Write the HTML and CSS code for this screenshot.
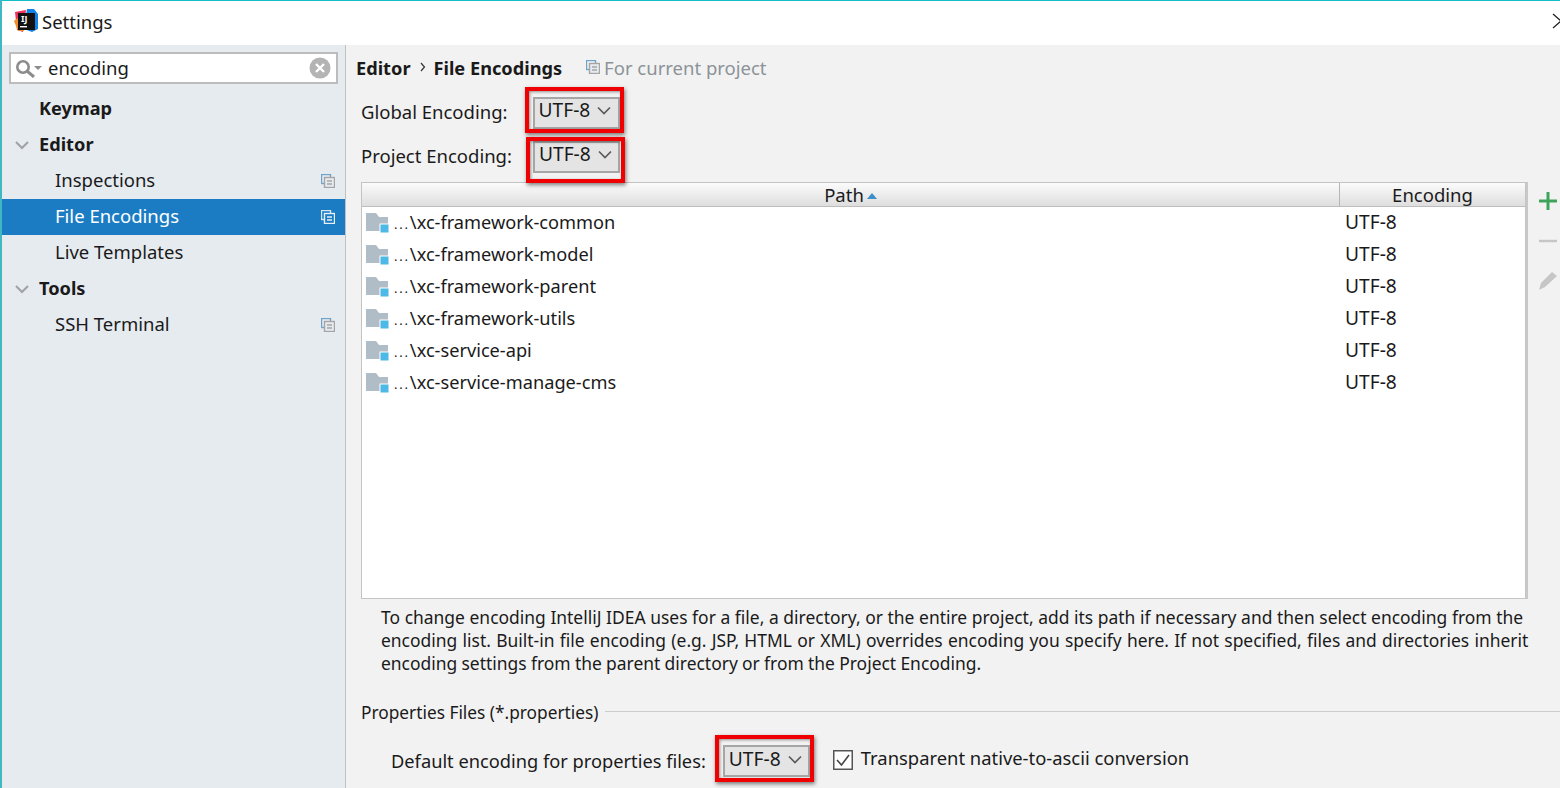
FILE: index.html
```html
<!DOCTYPE html>
<html>
    <head>
        <meta charset="utf-8">
        <title>Settings</title>
        <link rel="stylesheet" href="styles.css">
    </head>
    <body>
        <svg class="defs">
            <symbol id="copy" viewBox="0 0 14 14">
                <rect x="0.5" y="0.5" width="9" height="9" fill="none" stroke="#6fa3c7" stroke-width="1.4"></rect>
                <rect x="3.5" y="3.5" width="10" height="10" fill="#e6ebf0" stroke="#a5a5a5" stroke-width="1.4"></rect>
                <path d="M6 7h5M6 10h5" stroke="#a5a5a5" stroke-width="1.4"></path>
            </symbol>
            <symbol id="copyWhite" viewBox="0 0 14 14">
                <rect x="0.5" y="0.5" width="9" height="9" fill="none" stroke="#d5e6f3" stroke-width="1.4"></rect>
                <rect x="3.5" y="3.5" width="10" height="10" fill="#1b7cc4" stroke="#e8f0f6" stroke-width="1.4"></rect>
                <path d="M6 7h5M6 10h5" stroke="#e8f0f6" stroke-width="1.4"></path>
            </symbol>
            <symbol id="folder" viewBox="0 0 24 22">
                <path d="M0 1h10l3 4h9v14H0z" fill="#b0bcc6"></path>
                <rect x="14" y="12" width="9" height="9" fill="#4cb9e6" stroke="#fff"></rect>
            </symbol>
            <symbol id="chevron" viewBox="0 0 14 9">
                <path d="M1 1.5l6 6 6-6" fill="none" stroke="#5a5a5a" stroke-width="1.7"></path>
            </symbol>
            <symbol id="treeArrow" viewBox="0 0 14 9">
                <path d="M1 1l6 6 6-6" fill="none" stroke="#a0a4a8" stroke-width="2.2"></path>
            </symbol>
        </svg>

        <div class="titleBar">
            <svg class="appIcon" viewBox="0 0 24 24">
                <path d="M1 3l11-2-3 22-6-2z" fill="#f0325f"></path>
                <path d="M0 12l6-5 4 15-6 0z" fill="#f58a2e"></path>
                <path d="M13 0h7l4 5v15l-6 3-8-3z" fill="#1183e6"></path>
                <rect x="4" y="4" width="17" height="17" fill="#111"></rect>
                <text class="appIconText" x="7" y="13">IJ</text>
                <rect x="6" y="17" width="7" height="1.4" fill="#fff"></rect>
            </svg>
            <span class="titleText">Settings</span>
            <svg class="closeIcon" viewBox="0 0 10 16"><path d="M1 1l8 7-8 7" fill="none" stroke="#222" stroke-width="1.2"></path></svg>
        </div>

        <div class="main">
            <div class="sidebar">
                <div class="searchBox">
                    <svg class="searchIcon" viewBox="0 0 26 20">
                        <circle cx="7" cy="9" r="5.7" fill="none" stroke="#8c8c8c" stroke-width="2.6"></circle>
                        <path d="M11 13l7 6" stroke="#8c8c8c" stroke-width="3"></path>
                        <path d="M18 8h8l-4 4z" fill="#8c8c8c"></path>
                    </svg>
                    <span class="searchText">encoding</span>
                    <svg class="clearIcon" viewBox="0 0 22 22">
                        <circle cx="11" cy="11" r="10.5" fill="#b4b4b4"></circle>
                        <path d="M7 7l8 8M15 7l-8 8" stroke="#fff" stroke-width="2.4"></path>
                    </svg>
                </div>
                <div class="tree">
                    <div class="treeRow bold top"><span>Keymap</span></div>
                    <div class="treeRow bold top"><svg class="treeArrow"><use href="#treeArrow"></use></svg><span>Editor</span></div>
                    <div class="treeRow child"><span>Inspections</span><svg class="rowIcon"><use href="#copy"></use></svg></div>
                    <div class="treeRow child selected"><span>File Encodings</span><svg class="rowIcon"><use href="#copyWhite"></use></svg></div>
                    <div class="treeRow child"><span>Live Templates</span></div>
                    <div class="treeRow bold top"><svg class="treeArrow"><use href="#treeArrow"></use></svg><span>Tools</span></div>
                    <div class="treeRow child"><span>SSH Terminal</span><svg class="rowIcon"><use href="#copy"></use></svg></div>
                </div>
            </div>

            <div class="content">
                <div class="breadcrumb">
                    <span class="crumb">Editor</span>
                    <svg class="crumbSep" viewBox="0 0 6 10"><path d="M1 1l3.5 4L1 9" fill="none" stroke="#333" stroke-width="1.2"></path></svg>
                    <span class="crumb">File Encodings</span>
                    <svg class="crumbIcon"><use href="#copy"></use></svg>
                    <span class="scope">For current project</span>
                </div>

                <div class="encodingRow first">
                    <span class="encodingLabel">Global Encoding:</span>
                    <div class="combo"><span>UTF-8</span><svg class="comboArrow"><use href="#chevron"></use></svg></div>
                </div>
                <div class="encodingRow second">
                    <span class="encodingLabel">Project Encoding:</span>
                    <div class="combo"><span>UTF-8</span><svg class="comboArrow"><use href="#chevron"></use></svg></div>
                </div>

                <div class="tablePane">
                    <div class="table">
                        <div class="tableHead">
                            <div class="headPath">Path<svg class="sortArrow" viewBox="0 0 10 6"><path d="M0 6l5-6 5 6z" fill="#3d8ec9"></path></svg></div>
                            <div class="headEncoding">Encoding</div>
                        </div>
                        <div class="tableRow"><svg class="folderIcon"><use href="#folder"></use></svg><span class="pathCell"><small>...</small>\xc-framework-common</span><span class="encodingCell">UTF-8</span></div>
                        <div class="tableRow"><svg class="folderIcon"><use href="#folder"></use></svg><span class="pathCell"><small>...</small>\xc-framework-model</span><span class="encodingCell">UTF-8</span></div>
                        <div class="tableRow"><svg class="folderIcon"><use href="#folder"></use></svg><span class="pathCell"><small>...</small>\xc-framework-parent</span><span class="encodingCell">UTF-8</span></div>
                        <div class="tableRow"><svg class="folderIcon"><use href="#folder"></use></svg><span class="pathCell"><small>...</small>\xc-framework-utils</span><span class="encodingCell">UTF-8</span></div>
                        <div class="tableRow"><svg class="folderIcon"><use href="#folder"></use></svg><span class="pathCell"><small>...</small>\xc-service-api</span><span class="encodingCell">UTF-8</span></div>
                        <div class="tableRow"><svg class="folderIcon"><use href="#folder"></use></svg><span class="pathCell"><small>...</small>\xc-service-manage-cms</span><span class="encodingCell">UTF-8</span></div>
                    </div>
                    <div class="tableTools">
                        <svg class="toolIcon" viewBox="0 0 20 20"><path d="M10 1v18M1 10h18" stroke="#3fa45b" stroke-width="3"></path></svg>
                        <svg class="toolIcon" viewBox="0 0 20 20"><path d="M1 10h18" stroke="#c6c6c6" stroke-width="2.4"></path></svg>
                        <svg class="toolIcon" viewBox="0 0 20 20"><path d="M14 1l5 4L7 16l-6 3 2-7z" fill="#c6c6c6"></path></svg>
                    </div>
                </div>

                <div class="help">
                    <div class="helpOne">To change encoding IntelliJ IDEA uses for a file, a directory, or the entire project, add its path if necessary and then select encoding from the</div>
                    <div class="helpTwo">encoding list. Built-in file encoding (e.g. JSP, HTML or XML) overrides encoding you specify here. If not specified, files and directories inherit</div>
                    <div class="helpThree">encoding settings from the parent directory or from the Project Encoding.</div>
                </div>

                <div class="groupTitle"><span>Properties Files (*.properties)</span><div class="groupLine"></div></div>

                <div class="propertiesRow">
                    <span class="propertiesLabel">Default encoding for properties files:</span>
                    <div class="combo"><span>UTF-8</span><svg class="comboArrow"><use href="#chevron"></use></svg></div>
                    <svg class="checkbox" viewBox="0 0 20 20">
                        <rect x="0.75" y="0.75" width="18.5" height="18.5" fill="#fff" stroke="#555" stroke-width="1.5"></rect>
                        <path d="M4 10l4.5 5L16 5" fill="none" stroke="#444" stroke-width="1.6"></path>
                    </svg>
                    <span class="checkboxLabel">Transparent native-to-ascii conversion</span>
                </div>
            </div>
        </div>
    </body>
</html>
```

FILE: styles.css
```css
html, body {
    width: 100%;
    height: 100%;
    margin: 0;
    padding: 0;
    overflow: hidden;
}
body {
    display: flex;
    flex-direction: column;
    font-family: "Noto Sans", "Open Sans", sans-serif;
    font-size: 18.5px;
    color: #1a1a1a;
    background-color: #f2f2f2;
    border-left: 2px solid #3fb8c4;
    box-sizing: border-box;
}
.defs {
    display: none;
}
.titleBar {
    display: flex;
    align-items: center;
    height: 45px;
    flex: none;
    box-sizing: border-box;
    padding: 0 0 4px 12px;
    background-color: #fff;
    border-top: 1px solid #14c0c8;
}
.appIcon {
    width: 24px;
    height: 24px;
    margin-right: 4px;
}
.appIconText {
    font-size: 9px;
    font-weight: 700;
    fill: #fff;
}
.titleText {
    flex: 1;
}
.closeIcon {
    width: 10px;
    height: 16px;
    margin-right: -2px;
}
.main {
    display: flex;
    flex: 1;
    min-height: 0;
}
.sidebar {
    width: 344px;
    flex: none;
    box-sizing: border-box;
    padding-top: 7px;
    background-color: #e6ebf0;
    border-right: 1px solid #c0c0c0;
}
.searchBox {
    display: flex;
    align-items: center;
    height: 32px;
    box-sizing: border-box;
    margin: 0 7px 0 7px;
    padding: 0 5px 0 5px;
    background-color: #fff;
    border: 2px solid #bcbcbc;
}
.searchIcon {
    width: 26px;
    height: 20px;
    margin-right: 6px;
}
.searchText {
    flex: 1;
    padding-bottom: 2px;
}
.clearIcon {
    width: 22px;
    height: 22px;
}
.tree {
    padding-top: 7px;
}
.treeRow {
    display: flex;
    align-items: center;
    height: 36px;
    padding-right: 10px;
}
.treeRow span {
    flex: 1;
    padding-bottom: 2px;
}
.top {
    padding-left: 37px;
}
.bold {
    font-weight: 700;
    font-size: 18.2px;
}
.child {
    padding-left: 53px;
}
.child span {
    padding-bottom: 4px;
}
.selected {
    background-color: #1b7cc4;
    color: #fff;
}
.treeArrow {
    width: 14px;
    height: 9px;
    margin-left: -24px;
    margin-right: 10px;
}
.rowIcon {
    width: 14px;
    height: 14px;
}
.content {
    flex: 1;
    min-width: 0;
}
.breadcrumb {
    display: flex;
    align-items: center;
    height: 46px;
    box-sizing: border-box;
    padding: 0 0 2px 10px;
}
.crumb {
    font-weight: 700;
    font-size: 18.2px;
    padding-top: 2px;
}
.crumbSep {
    width: 6px;
    height: 10px;
    margin: 0 8px 0 9px;
}
.crumbIcon {
    width: 14px;
    height: 14px;
    margin: 0 4px 0 24px;
}
.scope {
    color: #8c9298;
}
.encodingRow {
    display: flex;
    align-items: center;
    height: 44px;
    padding-left: 15px;
}
.encodingLabel {
    padding-bottom: 4px;
}
.first .combo {
    margin-left: 26px;
    padding-left: 3px;
}
.second .combo {
    margin-left: 21px;
}
.combo {
    position: relative;
    display: flex;
    align-items: center;
    width: 87px;
    height: 32px;
    flex: none;
    box-sizing: border-box;
    padding: 0 0 5px 4px;
    font-size: 19.2px;
    background-color: #e4e4e4;
    border: 2px solid #a6a6a6;
    gap: 7px;
}
.encodingRow .combo {
    padding-bottom: 7px;
}
/* red annotation drawn on top of the screenshot */
.combo::after {
    content: "";
    position: absolute;
    inset: -12px -6px -6px -10px;
    border: 4px solid #f00000;
    box-shadow: 1px 2px 4px rgba(0, 0, 0, 0.5), inset 1px 1px 3px rgba(0, 0, 0, 0.4);
}
.second .combo::after {
    inset: -6px -7px -12px -9px;
}
.propertiesRow .combo::after {
    inset: -12px -6px -7px -10px;
}
.comboArrow {
    width: 14px;
    height: 9px;
    margin-top: 2px;
}
.tablePane {
    display: flex;
    height: 417px;
    margin-top: 3px;
    padding-left: 15px;
}
.table {
    width: 1165px;
    flex: none;
    box-sizing: border-box;
    background-color: #fff;
    border: 1px solid #c4c4c4;
}
.tableHead {
    display: flex;
    height: 24px;
    box-sizing: border-box;
    line-height: 24px;
    background: linear-gradient(#fbfbfb, #dedede);
    border-bottom: 1px solid #bdbdbd;
}
.headPath {
    width: 978px;
    box-sizing: border-box;
    text-align: center;
    border-right: 1px solid #b5b5b5;
}
.sortArrow {
    width: 10px;
    height: 6px;
    margin-left: 3px;
    vertical-align: 3px;
}
.headEncoding {
    flex: 1;
    text-align: center;
}
.tableRow {
    display: flex;
    align-items: center;
    height: 32px;
    padding-left: 4px;
}
.folderIcon {
    width: 24px;
    height: 22px;
    margin-right: 4px;
    flex: none;
}
.pathCell {
    width: 951px;
    flex: none;
    font-size: 18.2px;
    padding-bottom: 2px;
}
.pathCell small {
    font-size: 13px;
    letter-spacing: 1.8px;
}
.encodingCell {
    flex: 1;
    font-size: 19.2px;
    padding-bottom: 4px;
}
.tableTools {
    display: flex;
    flex-direction: column;
    align-items: center;
    flex: 1;
    gap: 20px;
    padding: 9px 0 0 8px;
    border-left: 2px solid #c8c8c8;
    box-sizing: border-box;
}
.toolIcon {
    width: 20px;
    height: 20px;
}
.help {
    margin: 7px 0 0 35px;
    line-height: 23px;
    white-space: nowrap;
    font-size: 17.45px;
}
.helpOne {
    word-spacing: 0.08px;
}
.helpTwo {
    word-spacing: 0.75px;
}
.helpThree {
    word-spacing: -0.27px;
}
.groupTitle {
    display: flex;
    align-items: center;
    height: 26px;
    margin-top: 23px;
    padding-left: 15px;
    gap: 7px;
    font-size: 17.3px;
}
.groupTitle span {
    padding-top: 2px;
}
.groupLine {
    flex: 1;
    height: 1px;
    background-color: #cccccc;
}
.propertiesRow {
    display: flex;
    align-items: center;
    height: 46px;
    margin-top: 14px;
    padding-left: 45px;
}
.propertiesLabel {
    margin-right: 17px;
    padding-bottom: 2px;
    font-size: 18.25px;
}
.checkbox {
    width: 20px;
    height: 20px;
    margin: 0 8px 2px 23px;
}
.checkboxLabel {
    padding-bottom: 8px;
    font-size: 18.4px;
}
```
